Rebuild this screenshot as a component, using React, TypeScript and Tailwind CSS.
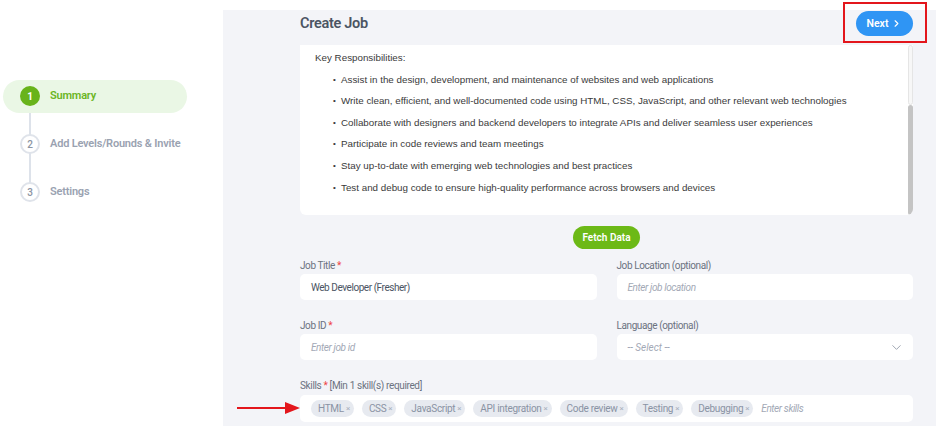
import { ChevronRight, ChevronDown } from 'lucide-react'

const responsibilities = [
  'Assist in the design, development, and maintenance of websites and web applications',
  'Write clean, efficient, and well-documented code using HTML, CSS, JavaScript, and other relevant web technologies',
  'Collaborate with designers and backend developers to integrate APIs and deliver seamless user experiences',
  'Participate in code reviews and team meetings',
  'Stay up-to-date with emerging web technologies and best practices',
  'Test and debug code to ensure high-quality performance across browsers and devices',
]

const skills = ['HTML', 'CSS', 'JavaScript', 'API integration', 'Code review', 'Testing', 'Debugging']

const steps = [
  { n: 1, label: 'Summary', active: true },
  { n: 2, label: 'Add Levels/Rounds & Invite', active: false },
  { n: 3, label: 'Settings', active: false },
]

function Sidebar() {
  return (
    <aside className="w-[223px] shrink-0 bg-white pt-[72px]">
      <div className="relative">
        {/* connector line between step circles */}
        <div className="absolute left-[29px] top-[24px] h-[96px] w-[2px] bg-[#dde2ea]" />
        {steps.map((s) => (
          <div key={s.n} className="relative flex h-[48px] items-center">
            <div
              className={
                s.active
                  ? 'ml-[3px] flex h-[33px] w-[184px] items-center rounded-full bg-[#eaf7e5] pl-[17px]'
                  : 'ml-[3px] flex h-[33px] w-[184px] items-center pl-[17px]'
              }
            >
              {s.active ? (
                <span className="flex h-[20px] w-[20px] items-center justify-center rounded-full bg-[#68b31b] text-[10px] font-bold text-white">
                  {s.n}
                </span>
              ) : (
                <span className="flex h-[20px] w-[20px] items-center justify-center rounded-full border-2 border-[#dfe3ea] bg-white text-[10px] font-medium text-[#8c94a3]">
                  {s.n}
                </span>
              )}
              <span
                className={
                  s.active
                    ? 'ml-[10px] text-[11px] font-semibold tracking-[-0.2px] text-[#6ab51f]'
                    : 'ml-[10px] text-[11px] font-semibold tracking-[-0.2px] text-[#9aa2b1]'
                }
              >
                {s.label}
              </span>
            </div>
          </div>
        ))}
      </div>
    </aside>
  )
}

function Field({
  label,
  required,
  optional,
  children,
}: {
  label: string
  required?: boolean
  optional?: boolean
  children: React.ReactNode
}) {
  return (
    <div>
      <div className="mb-[2px] h-[12px] text-[10px] leading-[12px] tracking-[-0.4px] text-[#6b7280]">
        {label}
        {required && <span className="text-[#ef4444]"> *</span>}
        {optional && <span> (optional)</span>}
      </div>
      {children}
    </div>
  )
}

export default function App() {
  return (
    <div
      className="relative flex h-[426px] w-[936px] overflow-hidden bg-white"
      style={{ fontFamily: 'Roboto, "Noto Sans", sans-serif' }}
    >
      <Sidebar />

      <main className="mt-[10px] flex-1 bg-[#f3f4f8] pl-[77px] pr-[23px] pt-[1px]">
        {/* Header */}
        <div className="flex h-[25px] items-center justify-between">
          <h1 className="text-[14.5px] font-semibold tracking-[-0.3px] text-[#4b5563]">Create Job</h1>
          <button className="flex h-[25px] w-[57px] items-center justify-center gap-[3px] rounded-full bg-[#2f95f4] text-[10.5px] font-semibold text-white">
            Next
            <ChevronRight size={11} strokeWidth={2.5} />
          </button>
        </div>

        {/* Job description */}
        <div className="mt-[9px] flex h-[170px] overflow-hidden rounded-b-[6px] bg-white">
          <div
            className="flex-1 pl-[15px] pt-[2px] text-[9.8px] leading-[21.6px] text-[#3a3a3a]"
            style={{ fontFamily: '"Liberation Sans", Arial, sans-serif' }}
          >
            <p>Key Responsibilities:</p>
            <ul className="pl-[18px]">
              {responsibilities.map((r) => (
                <li key={r} className="flex">
                  <span className="w-[8px] shrink-0 text-[8px]">•</span>
                  <span>{r}</span>
                </li>
              ))}
            </ul>
          </div>
          <div className="flex w-[5px] flex-col">
            <div className="h-[60px] rounded-full border border-[#e5e5e5] bg-[#f7f7f7]" />
            <div className="flex-1 rounded-full bg-[#c4c4c4]" />
          </div>
        </div>

        {/* Fetch */}
        <div className="mt-[11px] flex justify-center">
          <button className="h-[23px] w-[67px] rounded-full bg-[#6cb917] text-[10px] font-semibold text-white">
            Fetch Data
          </button>
        </div>

        {/* Form */}
        <div className="mt-[11px] grid grid-cols-2 gap-x-[20px] gap-y-[20px]">
          <Field label="Job Title" required>
            <div className="flex h-[26px] items-center rounded-[5px] bg-white pl-[11px] text-[10px] tracking-[-0.45px] text-[#4b5563]">
              Web Developer (Fresher)
            </div>
          </Field>
          <Field label="Job Location" optional>
            <div className="flex h-[26px] items-center rounded-[5px] bg-white pl-[11px] text-[10px] italic tracking-[-0.4px] text-[#a3a9b6]">
              Enter job location
            </div>
          </Field>
          <Field label="Job ID" required>
            <div className="flex h-[26px] items-center rounded-[5px] bg-white pl-[11px] text-[10px] italic tracking-[-0.4px] text-[#a3a9b6]">
              Enter job id
            </div>
          </Field>
          <Field label="Language" optional>
            <div className="flex h-[26px] items-center justify-between rounded-[5px] bg-white pl-[11px] pr-[9px] text-[10px] italic text-[#a3a9b6]">
              -- Select --
              <ChevronDown size={15} strokeWidth={1.5} className="text-[#9aa1ad]" />
            </div>
          </Field>
          <div className="col-span-2">
            <div className="mb-[3px] h-[12px] text-[10px] leading-[12px] tracking-[-0.35px] text-[#6b7280]">
              Skills <span className="text-[#ef4444]">*</span> [Min 1 skill(s) required]
            </div>
            <div className="flex h-[27px] items-center gap-[8px] rounded-[5px] bg-white pl-[11px]">
              {skills.map((s) => (
                <span
                  key={s}
                  className="flex h-[17px] items-center gap-[2px] rounded-full bg-[#e7eaf0] pl-[7px] pr-[4px] text-[10px] tracking-[-0.3px] text-[#8a93a4]"
                >
                  {s}
                  <span className="text-[8px] text-[#a9b0bd]">×</span>
                </span>
              ))}
              <span className="text-[10px] italic tracking-[-0.4px] text-[#a3a9b6]">Enter skills</span>
            </div>
          </div>
        </div>
      </main>

      {/* annotation overlays */}
      <div className="absolute left-[843px] top-[2px] h-[41px] w-[84px] border-2 border-[#e3161c]" />
      <svg className="absolute left-[237px] top-[400px]" width="64" height="16" viewBox="0 0 64 16">
        <line x1="0" y1="8" x2="50" y2="8" stroke="#e3161c" strokeWidth="2" />
        <polygon points="48,2 63,8 48,14" fill="#e3161c" />
      </svg>
    </div>
  )
}
